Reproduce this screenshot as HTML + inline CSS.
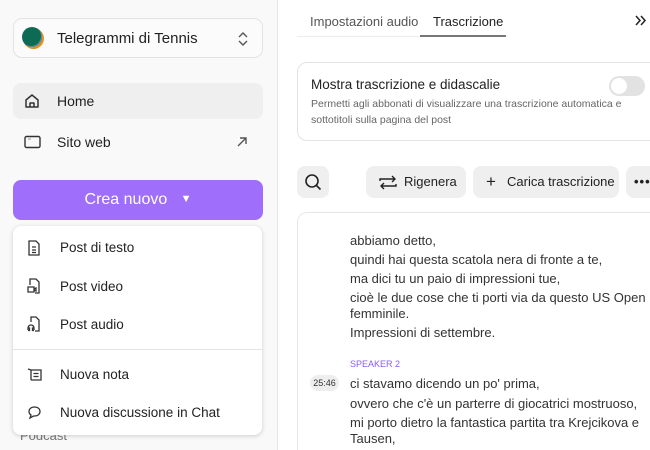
<!DOCTYPE html>
<html style="overflow:hidden;width:650px;height:450px"><head><meta charset="utf-8"><style>
*{box-sizing:border-box;margin:0;padding:0}
body{width:650px;height:450px;overflow:hidden;font-family:"Liberation Sans",sans-serif;background:#fff;position:relative;color:#222}
.side{position:absolute;left:0;top:0;width:278px;height:450px;background:#f9f9f9;border-right:1px solid #e6e6e6}
.abs{position:absolute}
.sel{left:13px;top:18px;width:250px;height:40px;border:1px solid #e3e3e3;border-radius:9px;background:#fbfbfb}
.row{left:13px;width:250px;height:36px;border-radius:8px;font-size:14px;line-height:36px;padding-left:44px;color:#222}
.btn{left:13px;top:180px;width:250px;height:40px;border-radius:8px;background:#9f6efb;color:#fff;font-size:16px;line-height:40px;text-align:center}
.dd{left:13px;top:226px;width:249px;height:209px;background:#fff;border-radius:8px;box-shadow:0 1px 5px rgba(0,0,0,.18)}
.it{position:absolute;left:47px;font-size:13.5px;color:#222}
.ic{position:absolute;left:14px}
.t{font-size:13px;color:#333}
.gb{background:#efefef;border-radius:8px;height:32px;top:166px;font-size:13px;line-height:32px;color:#222}
.tx{position:absolute;left:350px;font-size:13px;color:#333;white-space:nowrap}
</style></head><body>
<div class="side">
 <div class="abs sel">
  <div class="abs" style="left:9px;top:9px;width:21px;height:21px;border-radius:50%;background:#e8901c"></div>
  <div class="abs" style="left:8px;top:8px;width:20px;height:20px;border-radius:50%;background:#0d6b55;box-shadow:-1px -1px 0 #5a8fa8 inset"></div>
  <div class="abs" style="left:43px;top:11px;font-size:15px;color:#222">Telegrammi di Tennis</div>
  <svg class="abs" style="left:223px;top:12px" width="12" height="16" viewBox="0 0 12 16"><path d="M2 6l4-4 4 4M2 10l4 4 4-4" fill="none" stroke="#555" stroke-width="1.4"/></svg>
 </div>
 <div class="abs row" style="top:83px;background:#efefef">Home</div>
 <svg class="abs" style="left:24px;top:93px" width="16" height="16" viewBox="0 0 16 16"><path d="M2 14V7l6-5 6 5v7zM6 14v-4h4v4" fill="none" stroke="#333" stroke-width="1.5" stroke-linejoin="round"/></svg>
 <div class="abs row" style="top:124px">Sito web</div>
 <svg class="abs" style="left:24px;top:135px" width="17" height="14" viewBox="0 0 17 14"><rect x="1" y="1.5" width="15" height="11" rx="1.5" fill="none" stroke="#333" stroke-width="1.4"/><path d="M4 4h3" stroke="#999" stroke-width="1"/></svg>
 <svg class="abs" style="left:236px;top:136px" width="12" height="12" viewBox="0 0 12 12"><path d="M2 10L10 2M4 2h6v6" fill="none" stroke="#555" stroke-width="1.4"/></svg>
 <div class="abs btn">Crea nuovo&nbsp;&nbsp;&nbsp;<span style="font-size:11px;position:relative;top:-2px">▼</span></div>
 <div class="abs" style="left:20px;top:428px;font-size:13px;color:#777">Podcast</div>
 <div class="abs dd">
  <svg class="ic" style="top:14px" width="14" height="16" viewBox="0 0 14 16"><path d="M2 1h7l3 3v11H2zM5 7h4M5 10h4M5 12.5h4" fill="none" stroke="#333" stroke-width="1.3"/></svg>
  <div class="it" style="top:14px">Post di testo</div>
  <svg class="ic" style="top:52px" width="14" height="16" viewBox="0 0 14 16"><path d="M3 7V1h6l3 3v11H8M1 9h6v5H1zM7 11l2-1v3l-2-1" fill="none" stroke="#333" stroke-width="1.3"/></svg>
  <div class="it" style="top:53px">Post video</div>
  <svg class="ic" style="top:90px" width="14" height="16" viewBox="0 0 14 16"><path d="M4 6V1h5l3 3v11H8M1 14v-2a3 3 0 016 0v2M1 12h1.5v2.5H1M7 12H5.5v2.5H7" fill="none" stroke="#333" stroke-width="1.3"/></svg>
  <div class="it" style="top:91px">Post audio</div>
  <div class="abs" style="left:0;top:123px;width:249px;height:1px;background:#e3e3e3"></div>
  <svg class="ic" style="top:141px" width="15" height="15" viewBox="0 0 15 15"><path d="M1 2l3 1v10M4 3h10v10H4M6.5 6.5h5M6.5 9.5h5" fill="none" stroke="#333" stroke-width="1.3"/></svg>
  <div class="it" style="top:141px">Nuova nota</div>
  <svg class="ic" style="top:179px" width="15" height="15" viewBox="0 0 15 15"><path d="M7.5 2C4 2 2 4 2 6.5c0 1.5.8 2.7 2 3.4L3 13l3.5-2h1C11 11 13 9 13 6.5S11 2 7.5 2z" fill="none" stroke="#333" stroke-width="1.3"/></svg>
  <div class="it" style="top:179px">Nuova discussione in Chat</div>
 </div>
</div>
<div class="abs" style="left:297px;top:36px;width:210px;height:1px;background:#ececec"></div>
<div class="abs t" style="left:310px;top:14px;color:#555">Impostazioni audio</div>
<div class="abs t" style="left:433px;top:14px;color:#222">Trascrizione</div>
<div class="abs" style="left:420px;top:35px;width:86px;height:1.5px;background:#777"></div>
<svg class="abs" style="left:635px;top:15px" width="12" height="11" viewBox="0 0 12 11"><path d="M1 1l4 4.5L1 10M6 1l4 4.5L6 10" fill="none" stroke="#222" stroke-width="1.5"/></svg>
<div class="abs" style="left:297px;top:62px;width:370px;height:79px;border:1px solid #e3e3e3;border-radius:10px"></div>
<div class="abs" style="left:311px;top:77px;font-size:13.5px;color:#222">Mostra trascrizione e didascalie</div>
<div class="abs" style="left:311px;top:96px;font-size:10.5px;color:#666;line-height:16px;width:330px">Permetti agli abbonati di visualizzare una trascrizione automatica e sottotitoli sulla pagina del post</div>
<div class="abs" style="left:609px;top:76px;width:36px;height:20px;border-radius:10px;background:#e2e2e2"></div>
<div class="abs" style="left:611px;top:78px;width:16px;height:16px;border-radius:50%;background:#fff"></div>
<div class="abs gb" style="left:297px;width:32px"><svg style="position:absolute;left:7px;top:7px" width="18" height="18" viewBox="0 0 18 18"><circle cx="8" cy="8" r="6" fill="none" stroke="#222" stroke-width="1.6"/><path d="M12.5 12.5l4 4" stroke="#222" stroke-width="1.6"/></svg></div>
<div class="abs gb" style="left:366px;width:100px;padding-left:38px"><svg style="position:absolute;left:13px;top:8px" width="18" height="17" viewBox="0 0 18 17"><path d="M1 7V5h15M13 2l3 3-3 3M17 10v2H2M5 15l-3-3 3-3" fill="none" stroke="#222" stroke-width="1.4"/></svg>Rigenera</div>
<div class="abs gb" style="left:473px;width:146px;padding-left:34px"><span style="position:absolute;left:13px;font-size:17px">+</span>Carica trascrizione</div>
<div class="abs gb" style="left:626px;width:40px;padding-left:8px;font-weight:bold;letter-spacing:1px">•••</div>
<div class="abs" style="left:297px;top:212px;width:370px;height:238px;border:1px solid #e6e6e6;border-bottom:none;border-radius:10px 10px 0 0"></div>
<div class="tx" style="top:233px">abbiamo detto,</div>
<div class="tx" style="top:252px">quindi hai questa scatola nera di fronte a te,</div>
<div class="tx" style="top:271px">ma dici tu un paio di impressioni tue,</div>
<div class="tx" style="top:290px">cioè le due cose che ti porti via da questo US Open</div>
<div class="tx" style="top:306px">femminile.</div>
<div class="tx" style="top:325px">Impressioni di settembre.</div>
<div class="tx" style="top:359px;font-size:9px;color:#8a5cf5">SPEAKER 2</div>
<div class="abs" style="left:310px;top:375px;width:29px;height:16px;border-radius:8px;background:#eee;font-size:9px;line-height:16px;text-align:center;color:#333">25:46</div>
<div class="tx" style="top:376px">ci stavamo dicendo un po' prima,</div>
<div class="tx" style="top:396px">ovvero che c'è un parterre di giocatrici mostruoso,</div>
<div class="tx" style="top:415px">mi porto dietro la fantastica partita tra Krejcikova e</div>
<div class="tx" style="top:431px">Tausen,</div>
</body></html>
